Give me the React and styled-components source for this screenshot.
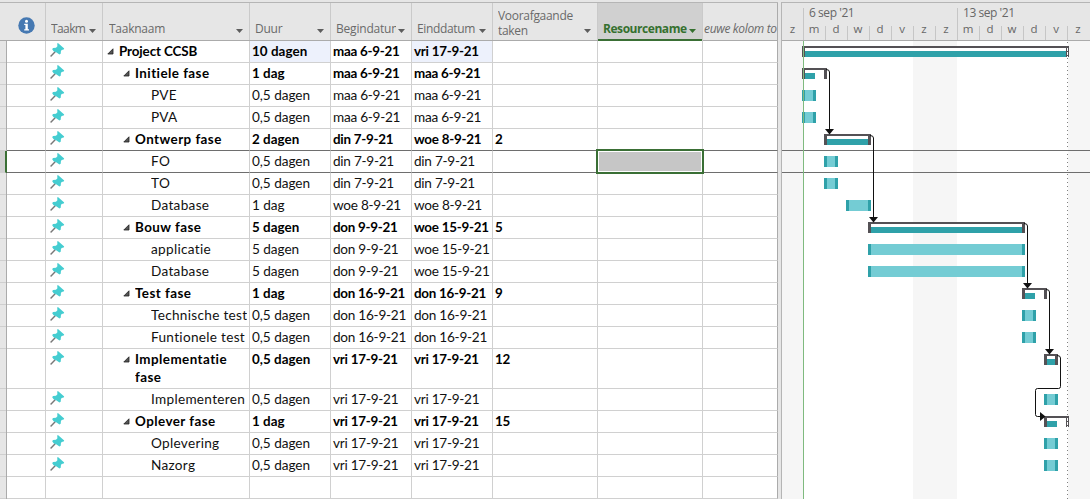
import React from "react";
import styled, { createGlobalStyle } from "styled-components";

const GlobalStyle = createGlobalStyle`
  * { box-sizing: border-box; }
  body { margin: 0; overflow: hidden; background: #e6e6e6; }
`;

const COLUMNS = "39px 57px 147px 81px 81px 81px 105px 105px 75px";

const Window = styled.div`
  display: flex;
  width: 1090px;
  height: 499px;
  padding-top: 2px;
  overflow: hidden;
  background: #e6e6e6;
  font-family: Lato, "Liberation Sans", sans-serif;
`;

const TablePane = styled.div`
  width: 778px;
  flex: none;
  border-top: 1px solid #b5b5b5;
`;

const Header = styled.div`
  display: grid;
  grid-template-columns: ${COLUMNS};
  height: 38px;
  padding-left: 7px;
  border-bottom: 1px solid #ababab;
`;

const HeaderCell = styled.div`
  display: flex;
  align-items: flex-end;
  position: relative;
  overflow: hidden;
  padding: 0 ${(p) => (p.$last ? 0 : 6)}px 2px ${(p) => p.$pad ?? 6}px;
  border-right: 1px solid ${(p) => (p.$last ? "#ababab" : "#cacaca")};
  margin-bottom: ${(p) => (p.$active ? "-1px" : "0")};
  background: ${(p) => (p.$active ? "#d0d0d0" : "transparent")};
  box-shadow: ${(p) => (p.$active ? "inset 0 -2px #3a6f35" : "none")};
  color: ${(p) => (p.$active ? "#35702f" : "#6a6a6a")};
  font: ${(p) => (p.$active ? 700 : 400)} 12px/15px "Open Sans", sans-serif;
  font-style: ${(p) => (p.$italic ? "italic" : "normal")};
  letter-spacing: ${(p) => p.$track ?? -0.25}px;
  white-space: nowrap;
`;

const HeaderLabel = styled.span`
  flex: 1;
  min-width: 0;
  overflow: hidden;
  margin-bottom: ${(p) => p.$drop ?? 2}px;
  white-space: pre-line;
`;

const NoWrapLabel = styled(HeaderLabel)`
  white-space: nowrap;
`;

const SortArrow = styled.svg`
  flex: none;
  width: 7px;
  height: 4px;
  margin: 0 0 ${(p) => (p.$active ? 6 : 5)}px 2px;
  fill: ${(p) => (p.$active ? "#35702f" : "#5d5d5d")};
`;

const InfoCell = styled(HeaderCell)`
  align-items: flex-start;
  padding: 14px 0 0 11px;
`;

const Row = styled.div`
  display: grid;
  grid-template-columns: 6px 1px ${COLUMNS};
  height: ${(p) => (p.$tall ? 40 : 22)}px;
  font-size: ${(p) => (p.$bold ? 13.4 : 13.6)}px;
  line-height: 18px;
  font-weight: ${(p) => (p.$bold ? 700 : 400)};
  color: ${(p) => (p.$bold ? "#000" : "#111")};
`;

const Gutter = styled.div`
  background: ${(p) => (p.$selected ? "#d0d0d0" : "#e6e6e6")};
  border-bottom: 1px solid #cfcfcf;
  border-right: ${(p) => (p.$selected ? "1px solid #3a6f35" : "none")};
`;

const GutterEdge = styled.div`
  background: ${(p) => (p.$selected ? "#3a6f35" : "#ababab")};
`;

const Cell = styled.div`
  position: relative;
  padding: 1px 0 0 ${(p) => p.$pad ?? 2}px;
  border-right: 1px solid ${(p) => (p.$last ? "#ababab" : "#d0d0d0")};
  border-bottom: 1px solid ${(p) => (p.$dark ? "#6e6e6e" : "#d0d0d0")};
  background: ${(p) => (p.$changed ? "#edf1fc" : "#fff")};
  white-space: nowrap;
  letter-spacing: ${(p) => p.$track ?? 0}px;
`;

const DateCell = styled(Cell)`
  letter-spacing: -0.26px;
`;

const NameCell = styled(Cell)`
  display: flex;
  overflow: hidden;
  padding: 1px 2px 0 ${(p) => (p.$level === 2 ? 48 : 4 + p.$level * 16)}px;
`;

const Toggle = styled.svg`
  flex: none;
  width: 7px;
  height: 7px;
  margin: 6px 5px 0 0;
`;

const TaskName = styled.span`
  flex: 1;
  min-width: 0;
  overflow: hidden;
  white-space: pre-line;
  letter-spacing: ${(p) => (p.$level === 0 ? -0.12 : 0.45)}px;
`;

const LeafName = styled(TaskName)`
  white-space: nowrap;
  letter-spacing: 0.3px;
`;

const PinIcon = styled.svg`
  display: block;
  width: 15px;
  height: 14px;
  margin-top: 1px;
`;

const Selection = styled.div`
  position: absolute;
  z-index: 2;
  left: -2px;
  top: -2px;
  width: 108px;
  height: 25px;
  border: 2px solid #3a6f35;
  background: #c6c6c6;
  box-shadow: inset 0 0 0 1px #fff;
`;

const Splitter = styled.div`
  width: 3px;
  flex: none;
`;

const ChartPane = styled.div`
  width: 309px;
  flex: none;
  border-top: 1px solid #b5b5b5;
  border-left: 1px solid #b5b5b5;
`;

const Timescale = styled.div`
  height: 38px;
  border-bottom: 1px solid #ababab;
  color: #666;
  font: 12px/16px "Open Sans", sans-serif;
`;

const Weeks = styled.div`
  display: flex;
  height: 18px;
  padding: 2px 0 0 21px;
`;

const Week = styled.div`
  width: 154px;
  flex: none;
  padding-left: 6px;
  letter-spacing: -0.45px;
`;

const Days = styled.div`
  display: flex;
  height: 19px;
`;

const Day = styled.div`
  position: relative;
  width: 22px;
  flex: none;
  text-align: center;
  font-size: 11.5px;
  line-height: 16px;
  color: #666;

  &::before {
    content: "";
    position: absolute;
    left: 0;
    bottom: 0;
    width: ${(p) => (p.$first ? 0 : 1)}px;
    height: ${(p) => (p.$week ? 32 : 14)}px;
    background: #c6c6c6;
  }
`;

const FirstDay = styled(Day)`
  width: 21px;
`;

const Chart = styled.svg`
  display: block;
  width: 308px;
  height: 458px;
`;

const TASKS = [
  { level: 0, name: "Project CCSB", dur: "10 dagen", start: "maa 6-9-21", end: "vri 17-9-21", changed: true, bar: [802, 1068, 1066] },
  { level: 1, name: "Initiele fase", dur: "1 dag", start: "maa 6-9-21", end: "maa 6-9-21", bar: [802, 827, 815] },
  { level: 2, name: "PVE", dur: "0,5 dagen", start: "maa 6-9-21", end: "maa 6-9-21", bar: [802, 816] },
  { level: 2, name: "PVA", dur: "0,5 dagen", start: "maa 6-9-21", end: "maa 6-9-21", bar: [802, 816] },
  { level: 1, name: "Ontwerp fase", dur: "2 dagen", start: "din 7-9-21", end: "woe 8-9-21", pred: "2", bar: [824, 871, 868], dark: true },
  { level: 2, name: "FO", dur: "0,5 dagen", start: "din 7-9-21", end: "din 7-9-21", bar: [824, 838], selected: true, dark: true },
  { level: 2, name: "TO", dur: "0,5 dagen", start: "din 7-9-21", end: "din 7-9-21", bar: [824, 838] },
  { level: 2, name: "Database", dur: "1 dag", start: "woe 8-9-21", end: "woe 8-9-21", bar: [846, 871] },
  { level: 1, name: "Bouw fase", dur: "5 dagen", start: "don 9-9-21", end: "woe 15-9-21", pred: "5", bar: [868, 1025, 1022] },
  { level: 2, name: "applicatie", dur: "5 dagen", start: "don 9-9-21", end: "woe 15-9-21", bar: [868, 1025] },
  { level: 2, name: "Database", dur: "5 dagen", start: "don 9-9-21", end: "woe 15-9-21", bar: [868, 1025] },
  { level: 1, name: "Test fase", dur: "1 dag", start: "don 16-9-21", end: "don 16-9-21", pred: "9", bar: [1022, 1047, 1035] },
  { level: 2, name: "Technische test", dur: "0,5 dagen", start: "don 16-9-21", end: "don 16-9-21", bar: [1022, 1036] },
  { level: 2, name: "Funtionele test", dur: "0,5 dagen", start: "don 16-9-21", end: "don 16-9-21", bar: [1022, 1036] },
  { level: 1, name: "Implementatie\nfase", dur: "0,5 dagen", start: "vri 17-9-21", end: "vri 17-9-21", pred: "12", tall: true, bar: [1044, 1058, 1055] },
  { level: 2, name: "Implementeren", dur: "0,5 dagen", start: "vri 17-9-21", end: "vri 17-9-21", bar: [1044, 1058] },
  { level: 1, name: "Oplever fase", dur: "1 dag", start: "vri 17-9-21", end: "vri 17-9-21", pred: "15", bar: [1044, 1068, 1057] },
  { level: 2, name: "Oplevering", dur: "0,5 dagen", start: "vri 17-9-21", end: "vri 17-9-21", bar: [1044, 1058] },
  { level: 2, name: "Nazorg", dur: "0,5 dagen", start: "vri 17-9-21", end: "vri 17-9-21", bar: [1044, 1058] },
  { level: 2, empty: true },
];

const Arrow = ({ active }) => (
  <SortArrow viewBox="0 0 7 4" $active={active}>
    <path d="M0 0H7L3.5 4Z" />
  </SortArrow>
);

const Pin = () => (
  <PinIcon viewBox="0 0 15 14">
    <path d="M0.6 13.4L5.4 8.6" stroke="#777" strokeWidth="1.4" />
    <path
      d="M7.2 0.3H8.2L14.2 5.4L13.7 6.5L11.6 7.1L10.9 8.2L10.7 10.8L9.4 11.6L6.6 9.5L3.6 8.3L2.2 6.2L3 4.9L6 4.7L7.4 3.3Z"
      fill="#45cdd1"
    />
  </PinIcon>
);

const Info = () => (
  <svg width="17" height="17" viewBox="0 0 17 17">
    <circle cx="8.5" cy="8.5" r="8.2" fill="#4679b2" />
    <circle cx="8.5" cy="4.2" r="1.5" fill="#fff" />
    <path d="M6.2 6.8H9.8V12.2H11V13.4H6.2V12.2H7.4V8H6.2Z" fill="#fff" />
  </svg>
);

function TaskRow({ task }) {
  const { dark, selected, changed } = task;
  const bold = !task.empty && task.level < 2;
  return (
    <Row $bold={bold} $tall={task.tall}>
      <Gutter $selected={selected} />
      <GutterEdge $selected={selected} />
      <Cell $dark={dark} />
      <Cell $dark={dark} $pad={4}>{!task.empty && <Pin />}</Cell>
      <NameCell $dark={dark} $level={task.level}>
        {bold && (
          <Toggle viewBox="0 0 7 7">
            <path d="M6 0.8V6H0.8Z" fill="#555" stroke="#222" strokeWidth="0.8" />
          </Toggle>
        )}
        {bold ? <TaskName $level={task.level}>{task.name}</TaskName> : <LeafName>{task.name}</LeafName>}
      </NameCell>
      <Cell $dark={dark} $changed={changed} $track={bold ? 0.05 : -0.05}>{task.dur}</Cell>
      <DateCell $dark={dark}>{task.start}</DateCell>
      <DateCell $dark={dark} $changed={changed}>{task.end}</DateCell>
      <DateCell $dark={dark}>{task.pred}</DateCell>
      <Cell $dark={dark}>{selected && <Selection />}</Cell>
      <Cell $dark={dark} $last />
    </Row>
  );
}

function Bar({ task, y }) {
  const [x1, x2, fillEnd] = task.bar;
  if (task.level === 2) {
    return (
      <g>
        <rect x={x1} y={y} width={x2 - x1} height="11" fill="#2fa1a9" />
        <rect x={x1 + 3} y={y} width={x2 - x1 - 6} height="11" fill="#74ccd4" />
      </g>
    );
  }
  return (
    <g>
      <rect x={x1 + 3} y={y + 2} width={x2 - x1 - 5} height="3" fill="#fff" />
      <rect x={x1 + 3} y={y + 5} width={fillEnd - x1 - 3} height="6" fill="#2fa1a9" />
      <rect x={x1} y={y} width={x2 - x1} height="2" fill="#545155" />
      <rect x={x1} y={y} width="3" height="11" fill="#545155" />
      <rect x={x2 === 1068 ? 1066 : x2 - 3} y={y} width="3" height="11" fill="#545155" />
      {x2 === 1068 && <path d={`M1067.5 ${y + 2}V${y + 11}`} stroke="#fff" strokeDasharray="3 1" />}
    </g>
  );
}

function Gantt() {
  let top = 41;
  const bars = TASKS.filter((t) => t.bar).map((task, i) => {
    const y = top + 5;
    top += task.tall ? 40 : 22;
    return <Bar key={i} task={task} y={y} />;
  });
  return (
    <Chart viewBox="782 41 308 458" shapeRendering="crispEdges">
      <rect x="782" y="41" width="308" height="458" fill="#fff" />
      <rect x="782" y="41" width="21" height="458" fill="#f6f6f6" />
      <rect x="913" y="41" width="44" height="458" fill="#f6f6f6" />
      <rect x="1068" y="41" width="22" height="458" fill="#f6f6f6" />
      <path d="M1067.5 42V499" stroke="#808080" strokeDasharray="1 3" />
      <path d="M782 150.5H1090M782 172.5H1090" stroke="#6e6e6e" />
      {bars}
      <path d="M803.5 41V499" stroke="#7fba7f" />
      <g fill="none" stroke="#111" shapeRendering="auto">
        <path d="M826 69.5Q829.5 69.5 829.5 72V130" />
        <path d="M870 135.5Q873.5 135.5 873.5 138V218" />
        <path d="M1024 223.5Q1027.5 223.5 1027.5 226V284" />
        <path d="M1046 289.5Q1049.5 289.5 1049.5 292V350" />
        <path d="M1057 355.5Q1060.5 355.5 1060.5 358V386.5Q1060.5 388.5 1058.5 388.5H1037.5Q1035.5 388.5 1035.5 390.5V414.5Q1035.5 416.5 1037.5 416.5H1041" />
      </g>
      <g fill="#111" shapeRendering="auto">
        <path d="M825 129H834L829.5 134.5Z" />
        <path d="M869 217H878L873.5 222.5Z" />
        <path d="M1023 283H1032L1027.5 288.5Z" />
        <path d="M1045 349H1054L1049.5 354.5Z" />
        <path d="M1040 412V421L1045.5 416.5Z" />
      </g>
    </Chart>
  );
}

const DAYS = ["m", "d", "w", "d", "v", "z", "z", "m", "d", "w", "d", "v", "z"];

export default function App() {
  return (
    <Window>
      <GlobalStyle />
      <TablePane>
        <Header>
          <InfoCell><Info /></InfoCell>
          <HeaderCell $pad={5} $track={-0.6}><NoWrapLabel>Taakm</NoWrapLabel><Arrow /></HeaderCell>
          <HeaderCell><NoWrapLabel>Taaknaam</NoWrapLabel><Arrow /></HeaderCell>
          <HeaderCell $pad={5}><NoWrapLabel>Duur</NoWrapLabel><Arrow /></HeaderCell>
          <HeaderCell $pad={5} $track={-0.2}><NoWrapLabel>Begindatum</NoWrapLabel><Arrow /></HeaderCell>
          <HeaderCell $pad={5} $track={-0.35}><NoWrapLabel>Einddatum</NoWrapLabel><Arrow /></HeaderCell>
          <HeaderCell $pad={5} $track={-0.3}><HeaderLabel $drop={0}>{"Voorafgaande\ntaken"}</HeaderLabel><Arrow /></HeaderCell>
          <HeaderCell $active $pad={5} $track={-0.45}><NoWrapLabel $drop={3}>Resourcename</NoWrapLabel><Arrow active /></HeaderCell>
          <HeaderCell $italic $last $pad={1} $track={-0.35}><NoWrapLabel>euwe kolom to</NoWrapLabel></HeaderCell>
        </Header>
        {TASKS.map((task, i) => <TaskRow key={i} task={task} />)}
      </TablePane>
      <Splitter />
      <ChartPane>
        <Timescale>
          <Weeks>
            <Week>6 sep '21</Week>
            <Week>13 sep '21</Week>
          </Weeks>
          <Days>
            <FirstDay $first>z</FirstDay>
            {DAYS.map((d, i) => <Day key={i} $week={i % 7 === 0}>{d}</Day>)}
          </Days>
        </Timescale>
        <Gantt />
      </ChartPane>
    </Window>
  );
}
